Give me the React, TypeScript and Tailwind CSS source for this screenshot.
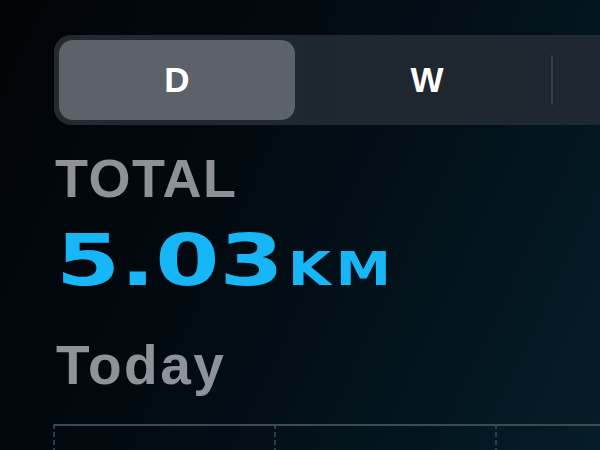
export default function App() {
  return (
    <div className="w-[600px] h-[450px] overflow-hidden bg-[linear-gradient(115deg,#010407_0%,#020a10_40%,#03151f_75%,#051d28_100%)] font-['Liberation_Sans',Arial,sans-serif]">
      {/* period picker */}
      <div className="pt-[35px] pl-[54px]">
        <div className="flex items-center w-[640px] h-[90px] p-[5px] rounded-[17px] bg-[linear-gradient(90deg,#24292e_0%,#1f272e_40%,#1e2931_100%)]">
          <div className="flex shrink-0 items-center justify-center w-[236px] h-full rounded-[14px] bg-[#5b6269] text-white text-[35px] font-bold">
            D
          </div>
          <div className="shrink-0 w-[2px] h-[50px] mx-[6px]" />
          <div className="flex shrink-0 items-center justify-center w-[236px] h-full text-white text-[35px] font-bold">
            W
          </div>
          <div className="shrink-0 w-[2px] h-[50px] mx-[6px] rounded-full bg-[#38424a]" />
          <div className="shrink-0 w-[100px] h-full" />
        </div>
      </div>

      {/* totals */}
      <div className="pl-[55px] mt-[26px] text-[54px] font-bold leading-none tracking-[1.5px] text-[#8e9197]">
        TOTAL
      </div>
      <div className="flex items-baseline pl-[56px] mt-[20px] leading-none font-bold font-['DejaVu_Sans',sans-serif] text-[#17b6f7]">
        <span className="inline-block w-[232px] text-[71px] origin-left scale-x-[1.3]">5.03</span>
        <span className="inline-block text-[47px] tracking-[4px] origin-left scale-x-[1.18]">KM</span>
      </div>
      <div className="pl-[56px] mt-[42px] text-[55px] font-bold leading-none tracking-[2.5px] text-[#8e939a]">
        Today
      </div>

      {/* chart grid */}
      <div className="mt-[31px]">
        <svg width="600" height="30" viewBox="0 0 600 30">
          <line x1="54" y1="1" x2="600" y2="1" stroke="#3b4c57" strokeWidth="2" />
          {[54, 275, 496].map((x) => (
            <line key={x} x1={x} y1="0" x2={x} y2="30" stroke="#3b4c57" strokeWidth="1.5" strokeDasharray="5 3" />
          ))}
        </svg>
      </div>
    </div>
  );
}
